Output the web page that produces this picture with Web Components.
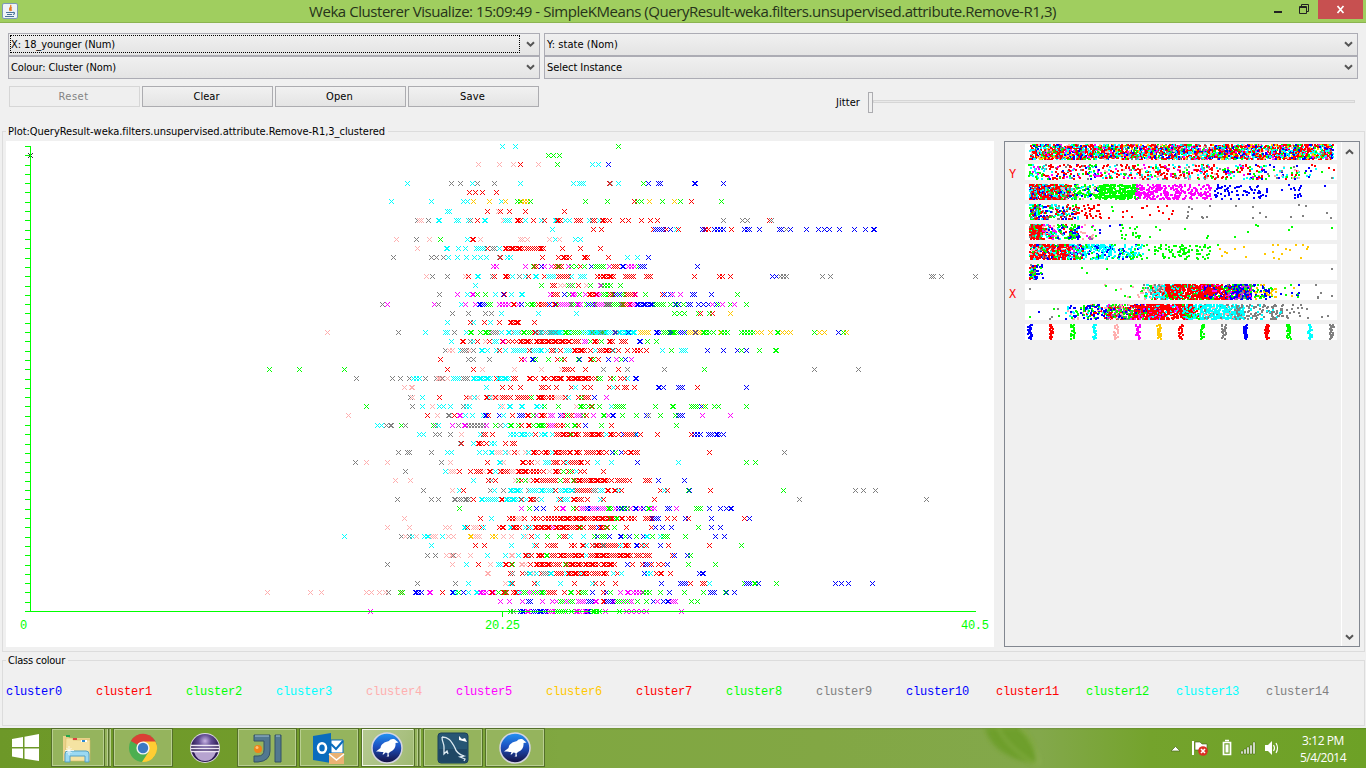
<!DOCTYPE html>
<html lang="en"><head><meta charset="utf-8"><title>Weka Clusterer Visualize</title>
<style>html,body{margin:0;width:1366px;height:768px;overflow:hidden;background:#f0f0f0}</style></head>
<body><weka-window></weka-window>
<script>
const COLORS={b:'#0000ff',r:'#ff0000',g:'#00ff00',c:'#00ffff',p:'#ffafaf',m:'#ff00ff',y:'#ffc800',k:'#808080'};
const define=(name,html,after)=>{
  const t=document.createElement('template');t.innerHTML=html;
  customElements.define(name,class extends HTMLElement{
    connectedCallback(){if(this.shadowRoot)return;this.attachShadow({mode:'open'}).append(t.content.cloneNode(true));if(after)after.call(this,this.shadowRoot);}
  });
};
function rng(seed){return()=>{seed=(seed*1664525+1013904223)>>>0;return seed/4294967296;};}

/* A label whose letter spacing is tuned so the text fills a given width. */
define('fit-text','<style>:host{display:inline-block;white-space:pre;line-height:1.2}span{display:inline-block}</style><span><slot></slot></span>',function(r){
  const s=r.querySelector('span'),w=+this.getAttribute('w'),n=this.textContent.length;
  if(w){s.style.letterSpacing=((w-s.getBoundingClientRect().width)/n)+'px';this.style.width=w+'px';}
});

define('title-bar',`<style>:host{display:grid;grid-template-columns:1fr auto;position:relative;height:22px;background:#a0ce5f;border-bottom:1px solid #8bb450;color:#26331a;font:15px "Open Sans",sans-serif}
.ico{position:absolute;left:2px;top:3px}.t{position:absolute;left:309px;top:2px;line-height:18px}.c{display:flex;grid-column:2}</style>
<svg class="ico" width="16" height="16"><rect x=".5" y=".5" width="15" height="15" rx="1.5" fill="#eef3f8" stroke="#7d99b5"/><path d="M8.5 2c2 2-3 3 0 6M10 4.5c-2 1-1.500 2 0 3" fill="none" stroke="#e8791e" stroke-width="1.300"/><path d="M4 9.500h7M5 11.500h5M3 13.500h9M11 9.500c2-.5 2 1.500 0 2" fill="none" stroke="#4a7398" stroke-width="1.100"/></svg>
<fit-text class="t" w="747">Weka Clusterer Visualize: 15:09:49 - SimpleKMeans (QueryResult-weka.filters.unsupervised.attribute.Remove-R1,3)</fit-text>
<svg class="c" width="100" height="22"><path d="M8 11h8v2H8z" fill="#222"/><path d="M33.500 6.500h7v7h-7zM33 7.500h8M35.500 6V4.500h7v7H41" fill="none" stroke="#222"/><path d="M52 0h45v19H52z" fill="#c75050"/><path d="M71.500 6l6 7M77.500 6l-6 7" stroke="#fff" stroke-width="1.700"/></svg>`);

define('combo-box',`<style>:host{display:flex;box-sizing:border-box;height:23px;border:1px solid #acacb4;background:linear-gradient(#f0f0f0,#e4e4e4);align-items:center;justify-content:space-between;padding:0 4px 1px 2px}
.f{display:flex;box-sizing:border-box;align-items:center;flex:1;height:18px;padding-top:2px;border:1px solid transparent;margin-right:6px;margin-left:-1px}
:host([focused]) .f{border:1px dotted #000}</style><div class="f"><slot></slot></div>
<svg width="9" height="7"><path d="M1 1.200l3.500 3.500L8 1.200" fill="none" stroke="#555" stroke-width="2"/></svg>`);
define('push-button',`<style>:host{display:flex;box-sizing:border-box;width:131px;height:21px;border:1px solid #acacb0;background:linear-gradient(#f1f1f1,#e4e4e4);align-items:center;justify-content:center;padding-right:2px;color:#000}
:host([disabled]){color:#838383;border-color:#d6d6d6;background:#efefef}</style><slot></slot>`);
define('jitter-slider',`<style>:host{display:flex;align-items:center;gap:8px;height:22px}fit-text{margin-top:2px}.s{display:flex;align-items:center}.th{box-sizing:border-box;width:5px;height:21px;border:1px solid #acacb0;background:#f0f0f0}.tr{box-sizing:border-box;width:482px;height:3px;margin-bottom:2px;border:1px solid #d6d6d6;background:#e9e9e9}</style>
<fit-text w="24">Jitter</fit-text><div class="s"><i class="th"></i><i class="tr"></i></div>`);
define('group-box',`<style>:host{display:block;box-sizing:border-box;position:relative;border:1px solid #dcdcdc;box-shadow:none}.l{position:absolute;left:3px;top:-7px;padding:0 3px 0 2px;background:#f0f0f0;line-height:15px;display:flex}</style>
<div class="l"><slot name="label"></slot></div><slot></slot>`);

/* One row per nominal value: [y, marks left of x=540, marks right of it].
   A mark is colour + thirds of a pixel; a-b is a run, :n its step, capitals are packed runs. */
const ROWS=[
[146,'c847 c886','g235'],
[155,'k-570','g25 g40 g58'],
[164,'p775 p838 p880 r901 p955','g52 c157 c175 b205'],
[183,'c562 k694 k721 c757 k772 k823 c901','c100 c118-130 r208 k211 c235 g310 b325 b355-362 B463-469 b550'],
[192,'r748 r766 r787 r829',''],
[201,'c514 c634 c730 c742 y760 y808 c844 y856 g892 g901 y904-925:9 g931','g136 g202 r283 g292-304:12 y328 g367 y403 g421 r454 g544'],
[211,'c682-688 r802 p835 r841 r868 r916','r73'],
[220,'k592 p598 p604 k625 C655 c709-715 c745 k750 r772 C793 p850 c856-868 R892-901 c915 r940','c4 r13 C46 R52-64 c76 c88 r109-121 c148 r158-166 c178 R187-196 r208 r247 r265 r304 r331 r352 k550 k607 k622 r688 k695'],
[229,'','c37 r160 r184 r340 b346-370 r379 b391 c409 r415 b487 b493 r497-507:9 b523-550:9 r574 b613 b622-631 b658 b718-725 k739 b751 b799 b835 b853 b868 b898 b943 b976 B1000'],
[239,'p529 k589 p628 g661 c742 R757 p781 p901-910 p922','p28 c46 p58 c106 c121'],
[248,'p592 C679 c715 c736 c769-793 r802 k817-826 c838 R856-907 r919-960','r4-10 r67 r121 r181'],
[257,'k520 k634 k649 k670 c685 c712 c739 c763 c781 c799 r841 k838 c862 c871','r7 r55 R70-88 R132-141 r205 c262 c292 b325'],
[266,'m820 m829 m916 RG940-952','b4 m13 m34 r46-64 g55 m85 g94 g108 r121 g134 b154 gr166-190 m208 r220-235 B247 m265-283:9 g295 b301-315 b472'],
[276,'p619 k637 k682 p736 r745 C773 k817 r823 R856-865 c877 k898 c915 r925 C945-952','r13 c25-43 r55-85 c94 c121-137 r172 r181 R190-219 r256-280 r319-331 r463 r537 r547 r571 b697-709:12 k721-739:9 k847 k871 k1174-1180 k1204 k1306'],
[285,'c766','g4 r37-45 p61 p73 g85-97 k90 r115 p140 g151 m181 k184 g193-215:9 g241'],
[294,'k658 m712 c742 M757 g772 g796 c826 B850 r853 c874 C904','m31 r40-55 b73 g88 M97-112 g118 m136 R148-168 mg172-200 rg205-220 gb220-250 r260-283 m286 g316 r367 b373 b391 m398 m421 b457-466 b514 g592'],
[304,'k487 m502 m643 k655 c724 m736 m766 B778-787 bg793-815 m838-865:9 R880 m895 b905 g922 G935-945 r955','rb4-30 R43 bg50-70 m60-90 g95-115 M113-125 bg140-165 m165-210 g200-250 rm245-270 m270-290 B293-338 g345-373 g391 BG405-422 g430 b445-455 b475-505:15 m517 b529 g535 m547 g571 m583 g619'],
[313,'k697 k745 k796 k814 c844 c955','g403 c109 g418 g433 g475 r481 g508 r517 y571'],
[322,'c682 r750 c760 r793 c811 r838 R871-897 r943',''],
[332,'p322 k535 c616 c676-685 k703 c739 G751 g781 G797-806 k815-835 c844 C865 kc880-900 G910 gc925-940 R943 ck950-960','ck4-60 c30-70 G75-88 gc95-120 cg125-200 ck150-240 b227 C237-287 b265 y300-325 B350-362 g370-400 gb390-440 y445-485 b433 b465 G490-508 g520 y540 g545-565:9 g604-640:9 y652-670:12 y691 G712 y727-754:12 g823 y838-856:15 b895 g910 y919'],
[341,'c694 R727 k750 c760 r772 p797 r808 c823-832 R848 m850 r865-890:12 R900-933 R950-958','R4-88 r103-115 m133 m139 g150 R162 r172 g185 R207-220 r244-256 B297 g322 g349'],
[350,'k676 p688-700:9 c721 k727-740 p748 k760 C784 c802 c829 r838 c856 c880-920 r928 c937-960','c4 c22 r34-40 c50 r61 c80-95 R103-140 r150 c165 r178-190 R200-218 c220 r235 r262 r283-300:9 r319 c367 g394 c424-436 b502 b550 b592 g604 b619 g658 G706'],
[359,'r661 k745 k760 k808 r904 m913 B937 g947','g25 r52 g64 r73 g115 b118 R150 g160 r175 b205 m229 g244 b256 m274'],
[369,'g148 g238 g373 r682 r760 p787 p883','p4 p64 r73-85 r97 r136 k190 r235 k262 k373 g493 k823 k955'],
[378,'k409 k517 k541 k568 c580-600:9 k616 k649 P655-665 k668 p682 c700-720 k730-745 C760-815 r828 C835-865 r880-890 R928 r945','R10 r25 R40-68 R85-108 R115-155 r165 g175-182 r211 g220 r241 r253 c263 B286'],
[387,'p553 P575 c799 r847 r871 r901','r4-10 r25 r49 r94 c106 r133 r151 r208 c220 r232 r252-262 r283 B355-362 b370 b416-428 r472 b619'],
[397,'k571 p577 c607 r658 r739 P748 c763 p772 R800 c808 p817-835 r826 pr840-875 r893-930 g935 R955','R4-12 r25-45:9 p50-70 r76 c85 r115 g124 r133-145 b163 m199'],
[406,'g439 k577 c607 p637 c658-673:12 c691 k730 c740-752:9 c841 p848 C868 C903 C950','c4 g12 g55 p108 G120-132 g145 G153 r153 g178 c214 g225-250 g346 G398 g454-475 y490 b484 g497 g522 g536 g619'],
[415,'p385 r622 p652 K686 r703 M717 c736 c757 c790 B797 r805 b838 c850 r877 b898-910 R922 g940 m950','R4-20 m30-40 b61 m66 rg75-97 m110-125 g130 r140 m161 G190 m205 B218 g246 g289 b319 k325 g361 g406 b415-427 m487 m571'],
[425,'c472-485:12 k499 K512 g544 k556 g640 k645 c655 m697 k714 M733 k745-790:9 m799 g826 k840 c855 G870 g895 r905 R925 g940 G955','G4-12 mr25-50 r60-75:9 g82 G103 r115 b136 g184 r214 g409'],
[434,'c598-610:12 k646-658:12 k691 p724 c781 r790-799 r817 c871-895:9 C905-922 c935 r945','c4 C13 c37 r50-60 R70-92 g95 R105-122 r135-150 R155-188 c200 R210-222 r235 rb250-290 c290 r302 r352 r455 b463-481:9 b505-520 B530-537 b551'],
[443,'k720 r723 c760 R775-787 r799 c815-826:9 r856 r877-887',''],
[452,'k535 k562-571 k634 c682-697:12 c778 c796 C814 p830-845 c855 p865 r882 p892 p915 c925 R940-950','r4 R15-25 c38 R45-58 r65-80 R88-95 R110-122 r140-165 R175-188 r200 b217 g226 b244 r255 R270 r285-295 r508 k733'],
[462,'k406 p439 p502 k664 p691 r802 C837 p850 R907 r925-935:9 p952','c16-30 r40-55 p50 r70 r85-120 c78 r124 r142 c172 c214 b292 c415 g619 g646'],
[471,'k556 c676 p690-705 r718 r751 r770-785 p790 R808 c825 r840 pr845-880 R895-922 r930-960:9','r10 p28 R45-58 g70 r85-100 g92 c108 r120 r133 r190'],
[480,'p526 p571 c760 r806 k815 r826 p885 g895 r903 g915 p925 r940 R950','r4-45 g60 r75-85 R100-122 g100 r128-145 R150-203 r215 r232-255 r268 r315-328 b355 b433'],
[490,'k610 p697 c718 r730 k812 c823 k850 C870-908 k925 c930-950','C4-18 c25-40 r45 c60-70 C75-98 rk105-170 c180-190 R203 R222 c235 r245 r361 c373 r382 B445 g445 r511 g730 k946 k970 k1006'],
[499,'k532 k634 k655 K703 k718-725 K735-746 r760 C785 c800-830 R845 C860-888 c900 r905 c920 RK930-948','c4 c55 r60 c70-85 R100 r112-127 r142 c181 r190 r343 k778 k1159'],
[508,'g718 m904 g928 b949','b10 r49 M68 g100 r108 m125-135 b142 mb150-175 m180-200 G205-213 m225 b235 BG245-263 m270 B285 m300 b310 G325 m335-348:9 b382-390 m409 g469-481 b508 b541 b559 B572-577'],
[518,'p553 r781 c814 r868-885:9 p893-907 r912 r940-955:9','r0 r16-55:9 R60-88 r95-110 R110-132 r140-160 R165-208 g210 R215-225 G230 R245 r265-290:9 r315-335 b338-355 r382 r403 b437 r445 b514 r613 b628'],
[527,'p502 p568 p676-690:12 C732 r741 p760-775 r785 c790 r838 R848 C870 R880-898 c915 r925 c930 R945-958','R4-38 m40 R50-88 r95-110 R115 g120 r130 r150-165 b175 R180-203 g200 g223 r259 r334 b346 b367 b394 g475 b514 b541'],
[536,'c373 k544 p555 k567 c577 p590 c613 C623 p635-645 c667 p684-712:14 Y751 p765-782 y817 y826 p850 p874 c910 p915 r934 c952','g22 g58 r70-80 c91 c130 g163 b172 g185-195 b208 B242 g255 b268 g289 b310 C320 g337 c361 g370-385 g436 b526 b553'],
[545,'c634 r766 r793 c874 c943 r949','r22 r35-47 r94-110:9 R128 c140 r157 k165 R170-198 c190 r205-235 c240 R255-272 B290 r305 c313 r320 b361 r385 r508 g604'],
[555,'k622 k646 p679 P695 k700 p715 p751 c802 c856 P875 c895 R915 k925 r935 R955','R4 G20 r35-50 R60-78 r85-100 R105-128 c140 r150-165 R170-208 r215-235 R240-272 r290-300 r315-328 r397 b404 b442 g451'],
[564,'k502 p697 c739 r775 p811 c835-845 R855 r875 g877 P905 p915 r930 R950-958','R4-38 r45-60 R75-118 g75 r123 R135-168 r175 R190-213 r222 b262 r278 r307 b315-328 r333 r355 r370 b381 g445 g526'],
[573,'P803 r870 k878 r906 k920 C927 p940 c950','kr4-25 C30-38 r50-70 c80 R85-118 c125 R130-148 r160-180 R190-203 c220 r232 c245 b313 c322-333:9 r350 R360-368 r391 b478 B488'],
[583,'k592 k706 c745 p856 C870 r877 r943 c951','c61 r103 c157 r165 r187 r227 b364 b422-440 r451 r487-495 c508 g613 b620-635 G642 b655 g709 b886 b904 b925 b997'],
[592,'p142 p271 p304 p439 p454 p478 p495 k504 g541-547 p544 B585-603 M629 r667 B697 c705 g715 b730 c745 C768 M780-798 R815 m820 g835 R850-863 g855 r880 R885 c895 mg905-960','G4-12 r25-45 r73 G92 r115 g125-140 b157 r190 b200 g212 m241 M263 m280-310:9 g310-330:9 g361 b388 g433 g490 b511-523 B555 g555 b583'],
[601,'m841 m868 m907 b925-935','m7 m37 m50 mg60-100 m115-135 b145-160 M165 R190 bg200-220 mg220-275 g292 g319 b340 m352 b370 B383 m395-410 g454 g472'],
[611,'m451 g871 k880 b901 B907 M922 b940-955 B957','b4-15 m25-40 mg45-80 g95 M110-118 B142 M135 G160-178 m195 g238 m260-320:15 m424']];

define('cluster-plot',`<style>:host{display:block;background:#fff}svg{display:block}text{font-family:"Liberation Mono",monospace;font-size:12px;fill:#0f0}</style>
<svg width="988" height="506" viewBox="6 141 988 506" shape-rendering="crispEdges"><g id="m"></g><g id="a"></g>
<text x="20" y="629" textLength="7">0</text><text x="485" y="629" textLength="35">20.25</text><text x="961" y="629" textLength="28">40.5</text></svg>`,function(root){
  const rand=rng(7);let out='';
  const mark=(x,y)=>`M${x-2} ${y-2}h1v1h-1zM${x+2} ${y-2}h1v1h-1zM${x-1} ${y-1}h1v1h-1zM${x+1} ${y-1}h1v1h-1zM${x} ${y}h1v1h-1zM${x-1} ${y+1}h1v1h-1zM${x+1} ${y+1}h1v1h-1zM${x-2} ${y+2}h1v1h-1zM${x+2} ${y+2}h1v1h-1z`;
  for(const [y,w,e] of ROWS) [[w,220],[e,540]].forEach(([list,base])=>{
    for(const tok of list.split(' ').filter(Boolean)){
      const [,cs,a,,b,,st]=/^([a-zA-Z]+)(-?\d+)(-(\d+))?(:(\d+))?$/.exec(tok);
      const solid=cs[0]<'a',set=cs.toLowerCase();
      let x=base+Math.round((+a-1)/3);const end=b?base+Math.round((+b-1)/3):x+(solid?1:0);
      const paths={};let i=0;
      while(x<=end){const c=set[Math.floor(rand()*set.length)];paths[c]=(paths[c]||'')+mark(x,y);
        x+=solid?(b?[1,2,3,1][i++%4]:1):st?Math.round(st/3):2;}
      for(const c in paths)out+=`<path fill="${COLORS[c]}" d="${paths[c]}"/>`;
    }});
  out+=`<path fill="#333" d="${mark(30,155)}"/>`;
  root.querySelector('#m').innerHTML=out;
  let ax='M30 146h1v466h-1zM25 611h951v1h-951zM502 611h1v6h-1z';
  for(let k=1;k<=50;k++)ax+=`M25 ${Math.round(611-k*9.3)}h5v1h-5z`;
  root.querySelector('#a').innerHTML=`<path fill="#0f0" d="${ax}"/>`;
});

/* Attribute strips: runs are [from, to, dots, colours]; dots are single points x,y,colour (thirds of a pixel). */
const STRIPS=[
{n:[[87,999,2900,'rrrrrrccccggbbmpky']]},
{n:[[84,130,38,'mggc'],[125,270,95,'rrrrckmbg'],[265,300,28,'mgbc'],[300,660,270,'rrrrrcccgkpm'],[660,800,88,'rmgcrbg'],[800,900,42,'rcbgkp'],[900,1004,15,'cgkbry']]},
{n:[[87,212,540,'rrrrrrcccbgk'],[180,230,65,'bcgkrp'],[222,300,85,'ggggbgcp'],[290,415,280,'g'],[405,560,210,'m'],[560,638,60,'m'],[638,700,28,'b'],[700,805,38,'b'],[860,917,13,'b']],d:'975,6,b 845,18,b'},
{n:[[87,120,140,'ggrcckb'],[112,160,65,'rcgbk'],[160,240,80,'rrrccgbk'],[240,305,26,'r']],d:'335,8,g 338,22,g 369,25,r 380,21,r 396,38,r 425,12,r 428,11,r 442,6,r 449,34,r 474,9,r 478,20,r 500,7,r 516,30,r 508,45,r 327,43,r 368,38,r 488,27,r 520,22,r 567,8,k 575,16,k 563,25,k 563,36,k 561,43,k 605,39,k 610,43,k 622,40,k 629,6,k 708,5,k 758,8,k 780,28,k 758,41,k 797,40,k 873,38,k 897,4,k 918,6,k 908,35,k 980,27,k 994,43,k'},
{n:[[87,130,200,'rrrrrgkc'],[125,170,80,'brgcpm'],[170,240,100,'bbgggcrk'],[240,290,20,'pppgmk'],[355,425,18,'g']],d:'301,17,b 300,26,b 330,5,b 359,4,b 467,8,g 480,17,g 450,39,g 555,14,g 624,35,g 621,42,g 705,38,g 743,24,g 767,2,g 774,7,g 868,19,g 876,8,g 996,11,g'},
{n:[[87,210,480,'rrrrrrrcgbpk'],[200,250,110,'bcckrmg'],[245,340,140,'cccccbbg'],[335,430,85,'cccggb'],[430,480,12,'g'],[480,580,54,'g'],[580,635,24,'g']],d:'655,3,g 660,15,y 674,23,y 680,26,y 667,37,y 706,14,y 732,9,y 739,40,y 795,29,y 820,3,y 835,3,y 818,24,y 822,43,y 845,30,y 857,15,y 838,44,y 870,17,y 887,2,y 910,2,y 924,9,y 921,16,y 902,43,y'},
{n:[[87,108,90,'rrgbkc'],[105,130,17,'bbg']],d:'246,11,g 261,26,g 321,14,g 996,14,k'},
{n:[[430,500,105,'pkkcpcg'],[410,440,10,'pgcp'],[455,550,200,'cccpkr'],[495,640,480,'rrrrrrrcg'],[600,690,270,'rrrrrbgm'],[675,755,270,'rbbbbggmk'],[755,820,62,'bggyb'],[820,900,15,'byg']],d:'90,14,k 315,4,p 318,6,g 347,17,g 364,14,p 394,6,g 400,8,p 375,37,g 390,38,g 383,38,p 418,38,p 876,26,b 898,4,b 882,12,y 948,2,k 963,26,k 953,40,k 996,36,k 954,43,k'},
{n:[[195,250,32,'bgbcp'],[245,330,110,'bbbggcrp'],[320,430,330,'bgggrrkmp'],[400,490,280,'rrrrrmgb'],[440,585,440,'rrrrrrrrrcm'],[545,610,120,'rccgc'],[600,735,340,'ccccccccckp'],[700,850,125,'kkkkc'],[850,935,15,'k']],d:'90,38,g 117,23,b 161,14,g 173,16,k 177,36,g 149,44,k 157,39,k 966,40,k 984,37,k'},
{sq:1}];
define('attribute-panel',`<style>:host{display:flex;box-sizing:border-box;border:1px solid #828790;background:#f0f0f0}svg.v{display:block;flex:1}.sb{box-sizing:border-box;width:18px;border-left:1px solid #fff;display:flex;flex-direction:column;justify-content:space-between;align-items:center;padding:6px 2px 5px 0}
text{font:12px "Liberation Mono",monospace;fill:red}</style>
<svg class="v" width="336" height="504" viewBox="1005 142 336 504" shape-rendering="crispEdges"><g id="s"></g><text x="1009" y="178">Y</text><text x="1009" y="298">X</text></svg>
<div class="sb"><svg width="9" height="7"><path d="M1 5.800l3.500-3.500L8 5.800" fill="none" stroke="#555" stroke-width="2"/></svg><svg width="9" height="7"><path d="M1 1.200l3.500 3.500L8 1.200" fill="none" stroke="#555" stroke-width="2"/></svg></div>`,function(root){
  const rand=rng(42);let out='';
  STRIPS.forEach((s,i)=>{const y0=144+i*20;out+=`<rect x="1025" y="${y0}" width="312" height="16" fill="#fff"/>`;
    const dot=(x,y,c)=>{out+=`<path fill="${COLORS[c]}" d="M${x} ${y}h2v2h-2z"/>`;};
    (s.n||[]).forEach(([a,b,n,cs])=>{for(let k=0;k<n;k++)dot(1000+Math.round((a+rand()*(b-a-4))/3),y0+Math.floor(rand()*15),cs[Math.floor(rand()*cs.length)]);});
    if(s.d)s.d.split(' ').forEach(t=>{const [x,y,c]=t.split(',');dot(999+Math.round(x/3),y0+Math.max(0,Math.round(y/3)-1),c);});
    if(s.sq)[...'brgcpmyrgkbrgck'].forEach((c,j)=>{for(let k=0;k<22;k++)dot(Math.round(1029+j*21.55+(rand()-.5)*4),y0+Math.floor(k*.67),c);});
  });
  root.querySelector('#s').innerHTML=out;
});

define('class-legend',`<style>:host{display:grid;grid-template-columns:repeat(15,90px);font:12px "Liberation Mono",monospace}</style>`,function(root){
  [...'brgcpmyrgkbrgck'].forEach((c,i)=>{const e=document.createElement('fit-text');e.textContent='cluster'+i;e.setAttribute('w',i>9?63:56);e.style.color=COLORS[c];root.append(e);});
});

const bird=`<defs><linearGradient id="w" x2="0" y2="1"><stop stop-color="#2394f4"/><stop offset=".45" stop-color="#1c50c0"/><stop offset="1" stop-color="#161040"/></linearGradient></defs><circle cx="16" cy="16" r="15" fill="url(#w)" stroke="#d5d5e2" stroke-width="1.500"/><path d="M5 19.500l4.500-3.500c.5-4 4-6 8.500-7 1-2 5-3 7-.5l2.500 2-3 .5c.5 4-1.500 7.500-5.500 9l-1.500 1.500.5 3h-2.500l1-1v-2.500l-2-.5-2 2h-1l1-2.500c-3 0-4.500-.5-7.500-.5z" fill="#fff"/>`;
const ICONS={
folder:`<path d="M2 4h5l1 2h21v23H2z" fill="#ead28a"/><path d="M5 6h6l1 2h17v21H4z" fill="#f5e3a2" stroke="#d5b868" stroke-width=".6"/><path d="M5 3h4v2H5z" fill="#23a64c"/><path d="M12 6h4v2h-4z" fill="#d44"/><path d="M20 8h6v2h-6z" fill="#fff"/><path d="M21 8h3v2h-3z" fill="#2d8ad2"/><path d="M4 30v-8q0-3 3-3h18q3 0 3 3v8h-4v-6H9v6z" fill="#9bd9f2" stroke="#54a0c2"/><path d="M8 14v9M4 18.500h9M5.500 16l5 5M10.500 16l-5 5" stroke="#fff" stroke-width=".8"/>`,
chrome:`<circle cx="16" cy="16" r="14" fill="#4caf50"/><path d="M16 16L3.900 9A14 14 0 0 1 29.800 13z" fill="#db3f35"/><path d="M16 9.500h12.400A14 14 0 0 1 15 30l6.500-10z" fill="#ffcd33"/><circle cx="16" cy="16" r="6.600" fill="#f4f4f4"/><circle cx="16" cy="16" r="5.200" fill="#3b79c3"/>`,
eclipse:`<defs><radialGradient id="e" cy=".25"><stop stop-color="#c9b4e4"/><stop offset=".45" stop-color="#634e94"/><stop offset="1" stop-color="#2d1c52"/></radialGradient></defs><circle cx="16" cy="16" r="15" fill="#dcd5e4"/><circle cx="16" cy="16" r="14" fill="url(#e)"/><path d="M5 20h22q-3 9-11 9t-11-9z" fill="#b7a4d0"/><path d="M2 13.500h28M2 16.500h28M2 19.500h28" stroke="#eee7f4" stroke-width="1.400"/>`,
ij:`<path d="M3 3h16v16q0 10-12 11H3v-6h4q6 0 6-6V9H3zM24 3h6v27h-6z" fill="#527890" stroke="#345266"/><path d="M4 4h14M25 4h4" stroke="#a4c2d2"/><circle cx="7" cy="17" r="4" fill="#f08418"/><circle cx="6" cy="15.500" r="1.500" fill="#ffc278"/>`,
outlook:`<path d="M0 4l18-3v30L0 28z" fill="#0a6cbd"/><ellipse cx="9" cy="16" rx="4" ry="4.800" fill="none" stroke="#fff" stroke-width="2.500"/><path d="M18 8h12v13H18z" fill="#fff" stroke="#0a6cbd"/><path d="M18 12l5 5 7-8" fill="none" stroke="#0a6cbd" stroke-width="2"/><path d="M16 21h15v11H16z" fill="#eab273"/><path d="M16 22l7.500 6 7.500-6" fill="none" stroke="#fff" stroke-width="1.500"/>`,
bird,
mysql:`<rect x="1" y="1" width="30" height="30" rx="3" fill="#275674" stroke="#1b4058"/><path d="M2 17h28v11q0 2-2 2H4q-2 0-2-2z" fill="#1f4764"/><path d="M5 5c6 0 9 3 13 11 1 4 3 6 9 8l-4 1 5 2-1 2M5 5c0 5 2 6 2 10v7l3-3 1 3" fill="none" stroke="#dce9f1" stroke-width="1.300"/><path d="M22 4l3 3 3-1 2 4-4-1-4-1z" fill="#fff"/>`};
define('task-button',`<style>:host{display:flex;box-sizing:border-box;width:60px;height:39px;align-items:center;justify-content:center;position:relative;margin-right:2px}
:host([open]){background:#95b45d;box-shadow:inset 0 0 0 1px #54702a,inset 0 0 0 2px #b9cf91}:host([active]){background:linear-gradient(115deg,#b6ca92,#a9c080 60%,#9ab76b);box-shadow:inset 0 0 0 1px #54702a,inset 0 0 0 2px #f2f6e8}
:host([stack])::after{content:"";position:absolute;right:0;top:1px;bottom:1px;width:8px;box-sizing:border-box;background:linear-gradient(90deg,#b9cf91 1px,#54702a 1px 2px,#95b45d 2px 4px,#b9cf91 4px 5px,#54702a 5px 6px,#b9cf91 7px)}
:host([stack]){padding-right:8px}svg{width:32px;height:32px;display:block}</style><svg viewBox="0 0 32 32"></svg>`,function(r){r.querySelector('svg').innerHTML=ICONS[this.getAttribute('icon')];});

define('task-bar',`<style>:host{display:flex;height:40px;background:linear-gradient(#0002,#0000 2px),linear-gradient(90deg,#6d9828 0,#729c2b 300px,#80a741 560px,#82a744 820px,#83a84b 1040px,#74a32c 1150px,#6da126 1366px);position:relative;color:#fff;font:12px "Open Sans",sans-serif}
.leaf{position:absolute;left:970px;top:0}.start{width:51px;display:flex;align-items:center;justify-content:center}.run{display:flex;flex:1}.tray{display:flex;align-items:center;z-index:1;position:relative}.clk{display:flex;flex-direction:column;align-items:center;width:66px;margin:2px 10px 0 10px;gap:1px}.clk fit-text{line-height:16px}</style>
<svg class="leaf" width="100" height="40"><defs><filter id="bl"><feGaussianBlur stdDeviation="2"/></filter></defs><path d="M15 0c5 20 25 32 50 36C68 20 60 8 50 0z" fill="#679c24" opacity=".75" filter="url(#bl)"/><path d="M50 0q16 16 20 36M28 0q10 20 40 38" stroke="#9aba5a" fill="none" opacity=".5" stroke-width="2" filter="url(#bl)"/></svg>
<div class="start"><svg width="28" height="28"><path d="M0 5l11-2v10H0zM12.500 2.700L27 0v13H12.500zM0 14.500h11v10l-11-2zM12.500 14.500H27V27l-14.500-2.200z" fill="#fff"/></svg></div>
<div class="run"><task-button icon="folder" open stack></task-button><task-button icon="chrome" open></task-button><task-button icon="eclipse"></task-button><task-button icon="ij" open></task-button><task-button icon="outlook" open></task-button><task-button icon="bird" active stack></task-button><task-button icon="mysql" open></task-button><task-button icon="bird" open></task-button></div>
<div class="tray"><svg width="110" height="24" viewBox="1170 737 110 24"><path d="M1171 752l4.500-4.500 4.500 4.500z" fill="#fff" stroke="#4b6b1b" stroke-width=".7"/><path d="M1193 742v14" stroke="#fff" stroke-width="2"/><path d="M1195 743h5l2 2h5v8h-5l-2-2h-5z" fill="#fff" stroke="#3f5c15" stroke-width=".6"/><circle cx="1203" cy="752" r="4.800" fill="#dc3024"/><path d="M1201 750l4 4M1205 750l-4 4" stroke="#fff" stroke-width="1.600"/><path d="M1223.500 743.500h7v12h-7zM1225 741.500h4" fill="none" stroke="#fff" stroke-width="1.700"/><path d="M1225.500 745.500h3v8h-3z" fill="#fff"/><path d="M1241 752h2v3h-2zM1244 750h2v5h-2zM1247 748h2v7h-2zM1250 746h2v9h-2zM1253 743h2v12h-2z" fill="#fff" stroke="#3f5c15" stroke-width=".5"/><path d="M1265 746h3l4-4v14l-4-4h-3z" fill="#fff"/><path d="M1273.500 746q2 3 0 6M1276 744q3 5 0 10" fill="none" stroke="#fff" stroke-width="1.200"/></svg>
<div class="clk"><fit-text w="42">3:12 PM</fit-text><fit-text w="46">5/4/2014</fit-text></div></div>`);

define('weka-window',`<style>:host{display:flex;flex-direction:column;width:1366px;height:768px;background:#f0f0f0;color:#000;font:11px "DejaVu Sans Condensed","Open Sans",sans-serif}
.combos{display:grid;grid-template-columns:532px 814px;column-gap:4px;margin:10px 8px 0;height:46px}
.bar{display:flex;justify-content:space-between;margin:7px 11px 0 9px;height:34px}.btns{display:flex;gap:2px;height:21px}jitter-slider{margin-top:5px}
.plot{margin:11px 1px 0 2px;height:521px}.row{display:flex;gap:10px;padding:9px 0 0 3px}attribute-panel{width:356px;height:506px}
.cls{margin:8px 1px 2px 2px;height:66px}class-legend{padding:24px 0 0 3px}</style>
<title-bar></title-bar>
<div class="combos"><combo-box focused><fit-text w="104">X: 18_younger (Num)</fit-text></combo-box><combo-box><fit-text w="71">Y: state (Nom)</fit-text></combo-box><combo-box><fit-text w="105">Colour: Cluster (Nom)</fit-text></combo-box><combo-box><fit-text w="75">Select Instance</fit-text></combo-box></div>
<div class="bar"><div class="btns"><push-button disabled><fit-text w="30">Reset</fit-text></push-button><push-button><fit-text w="26">Clear</fit-text></push-button><push-button><fit-text w="27">Open</fit-text></push-button><push-button><fit-text w="25">Save</fit-text></push-button></div><jitter-slider></jitter-slider></div>
<group-box class="plot"><fit-text slot="label" w="377">Plot:QueryResult-weka.filters.unsupervised.attribute.Remove-R1,3_clustered</fit-text><div class="row"><cluster-plot></cluster-plot><attribute-panel></attribute-panel></div></group-box>
<group-box class="cls"><fit-text slot="label" w="57">Class colour</fit-text><class-legend></class-legend></group-box>
<task-bar></task-bar>`);
</script></body></html>
